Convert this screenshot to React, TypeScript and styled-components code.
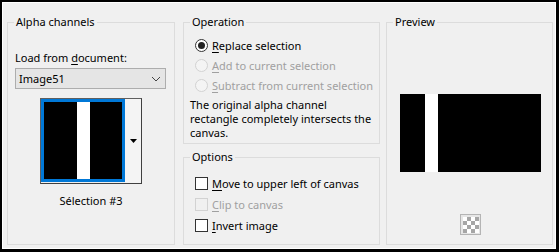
import React from "react";
import styled, { createGlobalStyle } from "styled-components";

const Global = createGlobalStyle`
  html, body { margin: 0; padding: 0; background: #f0f0f0; }
  body {
    font-family: "Segoe UI", "Noto Sans", "DejaVu Sans", sans-serif;
    font-size: 11px;
    color: #000;
  }
  * { box-sizing: border-box; }
`;

const Dialog = styled.div`
  width: 559px;
  height: 252px;
  border-style: solid;
  border-color: #000;
  border-width: 2px 3px 3px 2px;
  background: #f0f0f0;
`;

const Frame = styled.div`
  height: 100%;
  border: 1px solid #fff;
  padding: 11px 2px 2px 4px;
  display: flex;
  align-items: flex-start;
`;

const Column = styled.div<{ $w: number; $ml: number }>`
  width: ${(p) => p.$w}px;
  margin-left: ${(p) => p.$ml}px;
  display: flex;
  flex-direction: column;
  gap: 5px;
`;

const Group = styled.fieldset<{ $h: number }>`
  margin: 0;
  padding: 0;
  min-width: 0;
  height: ${(p) => p.$h}px;
  border: 1px solid #dcdcdc;
`;

const Legend = styled.legend`
  margin-left: 6px;
  padding: 0 2px;
  line-height: 16px;
  font-size: 11px;
`;

const LeftBody = styled.div`
  display: flex;
  flex-direction: column;
  padding: 20px 7px 0 7px;
`;

const FieldLabel = styled.div`
  line-height: 16px;
  height: 16px;
`;

const Combo = styled.div`
  margin-top: 2px;
  width: 151px;
  height: 21px;
  border: 1px solid #adadad;
  background: #e5e5e5;
  display: flex;
  align-items: center;
  justify-content: space-between;
  padding: 0 4px 0 3px;
`;

const Thumb = styled.div`
  margin-top: 9px;
  align-self: center;
  width: 102px;
  height: 86px;
  border: 1px solid #5f5f5f;
  border-right-color: #404040;
  border-bottom-color: #404040;
  display: flex;
`;

const ThumbImage = styled.div`
  width: 84px;
  height: 83px;
  border: 3px solid #0078d7;
  background: #000;
  padding-left: 33px;
`;

const Stripe = styled.div<{ $w: number }>`
  width: ${(p) => p.$w}px;
  height: 100%;
  background: #fff;
`;

const ThumbSide = styled.div`
  flex: 1;
  background: #f4f4f4;
  display: flex;
  align-items: center;
  justify-content: center;
`;

const Caption = styled.div`
  margin-top: 9px;
  line-height: 16px;
  text-align: center;
`;

const OpBody = styled.div`
  padding: 5px 0 0 0;
  display: flex;
  flex-direction: column;
`;

const OptRow = styled.div<{ $h: number; $disabled?: boolean }>`
  height: ${(p) => p.$h}px;
  display: flex;
  align-items: center;
  padding-left: 11px;
  gap: 4px;
  color: ${(p) => (p.$disabled ? "#a0a0a0" : "#000")};
  white-space: nowrap;
`;

const Radio = styled.span<{ $checked?: boolean; $disabled?: boolean }>`
  width: 13px;
  height: 13px;
  border-radius: 50%;
  border: 1px solid ${(p) => (p.$disabled ? "#d2d2d2" : "#333")};
  background: ${(p) => (p.$disabled ? "#f4f4f4" : "#fff")};
  display: flex;
  align-items: center;
  justify-content: center;
  flex: none;
  &::after {
    content: "";
    display: ${(p) => (p.$checked ? "block" : "none")};
    width: 7px;
    height: 7px;
    border-radius: 50%;
    background: #222;
  }
`;

const Check = styled.span<{ $disabled?: boolean }>`
  width: 13px;
  height: 13px;
  border: 1px solid ${(p) => (p.$disabled ? "#d2d2d2" : "#333")};
  background: ${(p) => (p.$disabled ? "#f0f0f0" : "#fff")};
  flex: none;
`;

const Desc = styled.p`
  margin: 3px 0 0 6px;
  line-height: 14px;
  width: 185px;
`;

const OptionsBody = styled.div`
  padding-top: 8px;
  display: flex;
  flex-direction: column;
`;

const PreviewBody = styled.div`
  display: flex;
  flex-direction: column;
  align-items: center;
  padding-top: 64px;
  padding-left: 2px;
`;

const PreviewImage = styled.div`
  width: 141px;
  height: 78px;
  background: #000;
  display: flex;
  padding-left: 25px;
`;

const CheckerButton = styled.div`
  margin-top: 42px;
  width: 21px;
  height: 21px;
  border: 1px solid #b4b4b4;
  background: #e6e6e6;
  display: flex;
  align-items: center;
  justify-content: center;
`;

const Checker = styled.div`
  width: 16px;
  height: 16px;
  background-color: #fff;
  background-image: conic-gradient(#a6a6a6 25%, #fff 0 50%, #a6a6a6 0 75%, #fff 0);
  background-size: 8px 8px;
`;

const U = styled.span`
  text-decoration: underline;
  text-underline-offset: 2px;
`;

export default function App() {
  return (
    <>
      <Global />
      <Dialog>
        <Frame>
          <Column $w={168} $ml={0}>
            <Group $h={231}>
              <Legend>Alpha channels</Legend>
              <LeftBody>
                <FieldLabel>
                  Load from <U>d</U>ocument:
                </FieldLabel>
                <Combo>
                  <span>Image51</span>
                  <svg width="10" height="6" viewBox="0 0 10 6">
                    <path d="M1 1 L5 5 L9 1" fill="none" stroke="#444" strokeWidth="1" />
                  </svg>
                </Combo>
                <Thumb>
                  <ThumbImage>
                    <Stripe $w={13} />
                  </ThumbImage>
                  <ThumbSide>
                    <svg width="7" height="4" viewBox="0 0 7 4">
                      <path d="M0 0 H7 L3.5 4 Z" fill="#000" />
                    </svg>
                  </ThumbSide>
                </Thumb>
                <Caption>Sélection #3</Caption>
              </LeftBody>
            </Group>
          </Column>
          <Column $w={197} $ml={8}>
            <Group $h={130}>
              <Legend>Operation</Legend>
              <OpBody>
                <OptRow $h={20}>
                  <Radio $checked />
                  <span>
                    <U>R</U>eplace selection
                  </span>
                </OptRow>
                <OptRow $h={20} $disabled>
                  <Radio $disabled />
                  <span>
                    <U>A</U>dd to current selection
                  </span>
                </OptRow>
                <OptRow $h={20} $disabled>
                  <Radio $disabled />
                  <span>
                    <U>S</U>ubtract from current selection
                  </span>
                </OptRow>
                <Desc>The original alpha channel rectangle completely intersects the canvas.</Desc>
              </OpBody>
            </Group>
            <Group $h={96}>
              <Legend>Options</Legend>
              <OptionsBody>
                <OptRow $h={21}>
                  <Check />
                  <span>
                    <U>M</U>ove to upper left of canvas
                  </span>
                </OptRow>
                <OptRow $h={21} $disabled>
                  <Check $disabled />
                  <span>
                    <U>C</U>lip to canvas
                  </span>
                </OptRow>
                <OptRow $h={21}>
                  <Check />
                  <span>
                    <U>I</U>nvert image
                  </span>
                </OptRow>
              </OptionsBody>
            </Group>
          </Column>
          <Column $w={167} $ml={6}>
            <Group $h={231}>
              <Legend>Preview</Legend>
              <PreviewBody>
                <PreviewImage>
                  <Stripe $w={13} />
                </PreviewImage>
                <CheckerButton>
                  <Checker />
                </CheckerButton>
              </PreviewBody>
            </Group>
          </Column>
        </Frame>
      </Dialog>
    </>
  );
}
